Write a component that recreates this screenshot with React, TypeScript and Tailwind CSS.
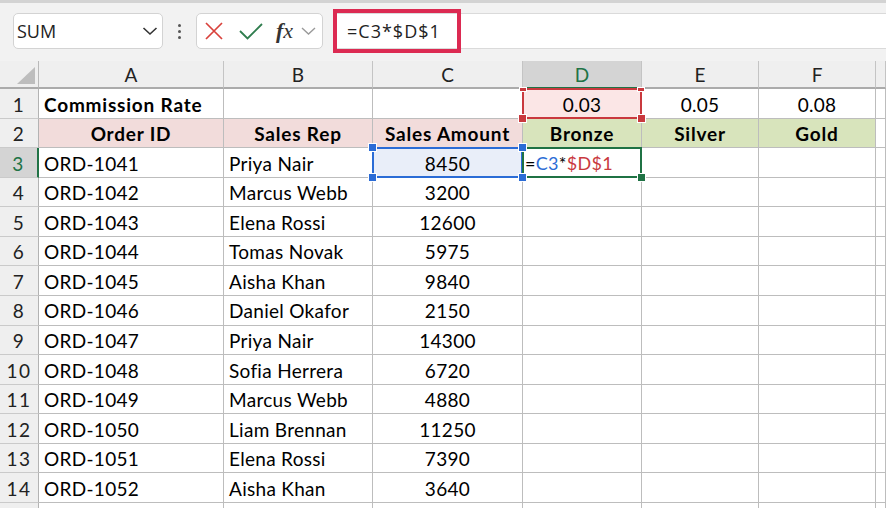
import React from "react";

const data: [string, string, string][] = [
  ["ORD-1041", "Priya Nair", "8450"],
  ["ORD-1042", "Marcus Webb", "3200"],
  ["ORD-1043", "Elena Rossi", "12600"],
  ["ORD-1044", "Tomas Novak", "5975"],
  ["ORD-1045", "Aisha Khan", "9840"],
  ["ORD-1046", "Daniel Okafor", "2150"],
  ["ORD-1047", "Priya Nair", "14300"],
  ["ORD-1048", "Sofia Herrera", "6720"],
  ["ORD-1049", "Marcus Webb", "4880"],
  ["ORD-1050", "Liam Brennan", "11250"],
  ["ORD-1051", "Elena Rossi", "7390"],
  ["ORD-1052", "Aisha Khan", "3640"],
];

const cell = "border-r border-b border-[#bdbdbd] flex items-center pt-[3px] min-w-0 overflow-visible whitespace-nowrap";
const reg = " text-[19px] tracking-[0.3px]";
const bold = " font-bold text-[19px] tracking-[0.8px]";
const rowHead = "bg-[#efefef] border-r border-b border-r-[#b3b3b3] border-b-[#cacaca] flex items-center justify-center pt-[3px] text-[19px] tracking-[1.5px] text-[#222]";
const colHead = "bg-[#efefef] border-r border-[#c4c4c4] border-b-2 border-b-[#ababab] flex items-center justify-center pt-[3px] text-[19px] text-[#222]";

function Handle({ cls }: { cls: string }) {
  return <div className={"absolute border border-white " + cls} />;
}

export default function App() {
  return (
    <div
      className="w-[886px] h-[508px] overflow-hidden bg-white text-black"
      style={{ fontFamily: "Lato, 'Noto Sans', sans-serif" }}
    >
      {/* Formula bar */}
      <div className="h-[61px] bg-[#f2f2f2] flex flex-col">
        <div className="h-[3px] bg-[#d3d3d3]" />
        <div className="flex items-start pt-[10px] pl-[13px]">
          <div
            className="w-[150px] h-[36px] rounded-[5px] border border-[#d3d3d3] bg-white flex items-center justify-between pl-[3px] pr-[4px] text-[18px] text-[#222]"
            style={{ fontFamily: "'Open Sans', sans-serif" }}
          >
            <span>SUM</span>
            <svg width="16" height="10" viewBox="0 0 16 10">
              <polyline points="1.5,2 8,8 14.5,2" fill="none" stroke="#333" strokeWidth="1.6" />
            </svg>
          </div>
          <div className="w-[33px] h-[36px] flex flex-col items-center justify-center gap-[3px]">
            <div className="w-[3px] h-[3px] rounded-full bg-[#555]" />
            <div className="w-[3px] h-[3px] rounded-full bg-[#555]" />
            <div className="w-[3px] h-[3px] rounded-full bg-[#555]" />
          </div>
          <div className="w-[127px] h-[36px] rounded-[5px] border border-[#d3d3d3] bg-white flex items-center pl-[8px]">
            <svg width="18" height="18" viewBox="0 0 18 18">
              <path d="M1 1 L17 17 M17 1 L1 17" stroke="#d9413b" strokeWidth="1.7" fill="none" />
            </svg>
            <svg className="ml-[16px]" width="24" height="17" viewBox="0 0 24 17">
              <polyline points="1,8 8.5,15.5 23,1" stroke="#2f7d4e" strokeWidth="1.8" fill="none" />
            </svg>
            <span
              className="ml-[13px] text-[22px] italic text-[#333] leading-none"
              style={{ fontFamily: "'Liberation Serif', 'DejaVu Serif', serif" }}
            >
              <span className="font-bold">f</span>x
            </span>
            <svg className="ml-[8px]" width="15" height="8" viewBox="0 0 15 8">
              <polyline points="1,1 7.5,7 14,1" stroke="#9a9a9a" strokeWidth="1.4" fill="none" />
            </svg>
          </div>
          <div className="ml-[10px] flex-1 h-[36px] bg-white border-y border-[#dadada] relative flex items-center">
            <span
              className="pl-[14px] text-[18px] tracking-[1px] text-[#222]"
              style={{ fontFamily: "'Open Sans', sans-serif" }}
            >
              =C3*$D$1
            </span>
            <div className="absolute left-0 top-[-5px] w-[128px] h-[44px] border-4 border-[#dc2a52]" />
          </div>
        </div>
      </div>

      {/* Grid */}
      <div className="grid grid-cols-[39px_185px_149px_150px_119px_117px_117px_10px] grid-rows-[28px_repeat(15,29.57px)] text-[19px]">
        {/* header row */}
        <div className="bg-[#efefef] border-r border-[#b9b9b9] border-b-2 border-b-[#ababab] relative">
          <svg className="absolute left-[17px] top-[6px]" width="18" height="17" viewBox="0 0 18 17">
            <polygon points="18,0 18,17 0,17" fill="#bdbdbd" />
          </svg>
        </div>
        <div className={colHead}>A</div>
        <div className={colHead}>B</div>
        <div className={colHead}>C</div>
        <div className="bg-[#d4d4d4] border-r border-[#c4c4c4] border-b-2 border-b-[#217346] flex items-center justify-center pt-[3px] text-[19px] text-[#217346]">D</div>
        <div className={colHead}>E</div>
        <div className={colHead}>F</div>
        <div className={colHead}></div>

        {/* row 1 */}
        <div className={rowHead}>1</div>
        <div className={cell + " pl-[5px]" + bold}>Commission Rate</div>
        <div className={cell}></div>
        <div className={cell}></div>
        <div className={cell + " justify-center relative bg-[#fbe6e6]" + reg}>
          <span className="relative z-10">0.03</span>
          <div className="absolute left-[-1px] right-[-1px] top-[-1px] bottom-[-1px] border-2 border-[#c9393e] z-10" />
          <Handle cls="bg-[#c9393e] w-[8px] h-[5px] left-[-4px] top-[-2px] z-20" />
          <Handle cls="bg-[#c9393e] w-[8px] h-[5px] right-[-4px] top-[-2px] z-20" />
          <Handle cls="bg-[#c9393e] w-[9px] h-[9px] left-[-5px] bottom-[-5px] z-20" />
          <Handle cls="bg-[#c9393e] w-[9px] h-[9px] right-[-5px] bottom-[-5px] z-20" />
        </div>
        <div className={cell + " justify-center" + reg}>0.05</div>
        <div className={cell + " justify-center" + reg}>0.08</div>
        <div className={cell}></div>

        {/* row 2 */}
        <div className={rowHead}>2</div>
        <div className={cell + " justify-center bg-[#f2dcdb]" + bold}>Order ID</div>
        <div className={cell + " justify-center bg-[#f2dcdb]" + bold}>Sales Rep</div>
        <div className={cell + " justify-center bg-[#f2dcdb]" + bold}>Sales Amount</div>
        <div className={cell + " justify-center bg-[#d8e4bc]" + bold}>Bronze</div>
        <div className={cell + " justify-center bg-[#d8e4bc]" + bold}>Silver</div>
        <div className={cell + " justify-center bg-[#d8e4bc]" + bold}>Gold</div>
        <div className={cell}></div>

        {data.map(([id, rep, amt], i) => {
          const r = i + 3;
          const active = r === 3;
          return (
            <React.Fragment key={id}>
              <div
                className={
                  active
                    ? "bg-[#d4d4d4] border-r-2 border-r-[#217346] border-b border-b-[#cacaca] flex items-center justify-center pt-[3px] text-[19px] tracking-[1.5px] text-[#217346]"
                    : rowHead
                }
              >
                {r}
              </div>
              <div className={cell + " pl-[5px]" + reg}>{id}</div>
              <div className={cell + " pl-[5px]" + reg}>{rep}</div>
              <div className={cell + " justify-center" + reg + (active ? " relative bg-[#e9eef9]" : "")}>
                <span className="relative z-10">{amt}</span>
                {active && (
                  <>
                    <div className="absolute left-[-1px] right-[-1px] top-[-1px] bottom-[-1px] border-2 border-[#2b6cd6] z-10" />
                    <Handle cls="bg-[#2b6cd6] w-[9px] h-[9px] left-[-5px] top-[-5px] z-20" />
                    <Handle cls="bg-[#2b6cd6] w-[9px] h-[9px] right-[-5px] top-[-5px] z-20" />
                    <Handle cls="bg-[#2b6cd6] w-[9px] h-[9px] left-[-5px] bottom-[-5px] z-20" />
                    <Handle cls="bg-[#2b6cd6] w-[9px] h-[9px] right-[-5px] bottom-[-5px] z-20" />
                  </>
                )}
              </div>
              <div className={cell + (active ? " relative pl-[2px] text-[18px] tracking-[0.3px]" : "")}>
                {active && (
                  <>
                    <span className="relative z-10">
                      =<span className="text-[#2b6cd6]">C3</span>*<span className="text-[#c9393e]">$D$1</span>
                    </span>
                    <div className="absolute left-[-1px] right-[-1px] top-[-1px] bottom-[-1px] border-2 border-[#1f7244] z-10" />
                    <Handle cls="bg-[#1f7244] w-[9px] h-[9px] right-[-5px] bottom-[-5px] z-20" />
                  </>
                )}
              </div>
              <div className={cell}></div>
              <div className={cell}></div>
              <div className={cell}></div>
            </React.Fragment>
          );
        })}
        {/* partial row 15 */}
        <div className={rowHead}></div>
        <div className={cell}></div>
        <div className={cell}></div>
        <div className={cell}></div>
        <div className={cell}></div>
        <div className={cell}></div>
        <div className={cell}></div>
        <div className={cell}></div>
      </div>
    </div>
  );
}
